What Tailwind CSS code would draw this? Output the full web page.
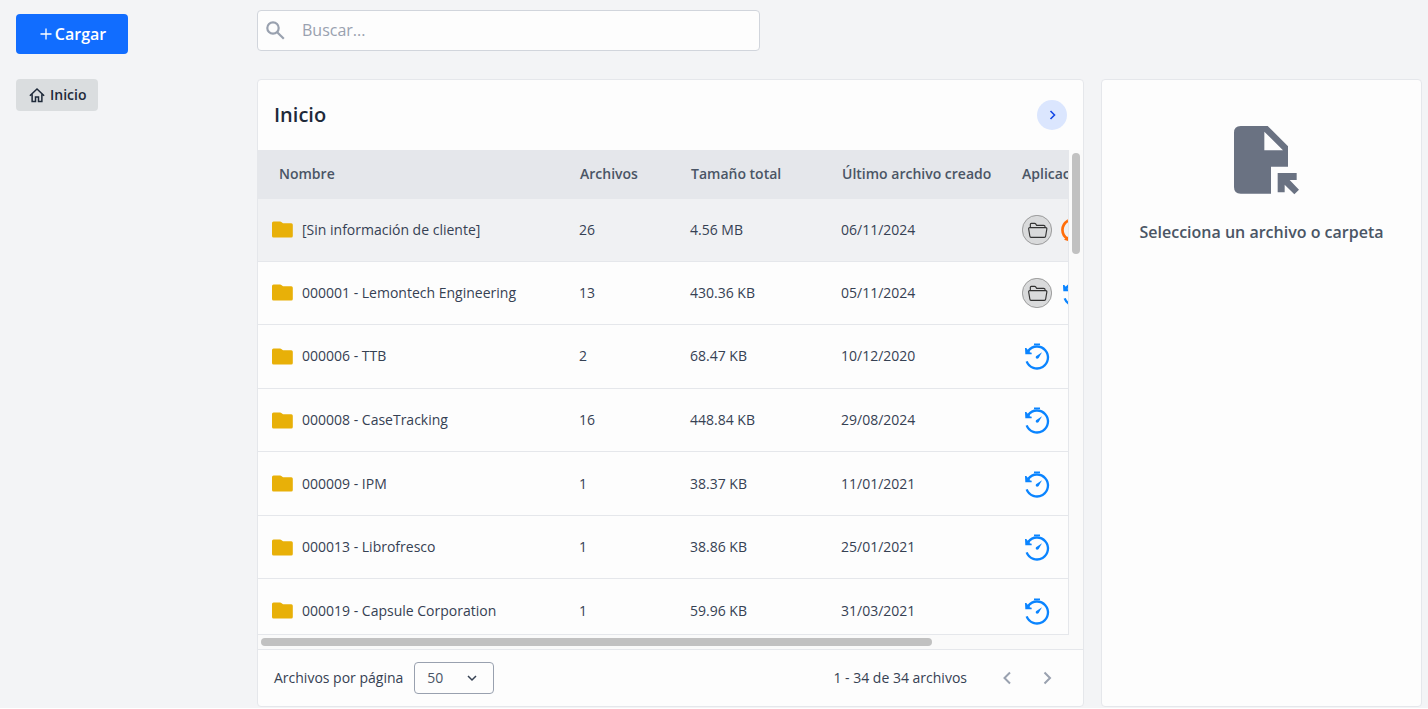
<!DOCTYPE html>
<html lang="es">

<head>
    <meta charset="UTF-8">
    <meta name="viewport" content="width=device-width, initial-scale=1">
    <title>Inicio</title>
    <script src="https://cdn.jsdelivr.net/npm/@tailwindcss/browser@4"></script>
</head>

<body class="bg-white font-['Open_Sans','Noto_Sans',sans-serif] text-sm text-gray-700">
    <!-- Shared icons -->
    <svg class="hidden">
        <symbol id="folder" viewBox="0 0 21 17">
            <path d="M1.5 0.5H8.2Q8.8 0.5 9.3 0.9L11 2.2H19.3Q20.8 2.2 20.8 3.7V15Q20.8 16.5 19.3 16.5H1.5Q0 16.5 0 15V2Q0 0.5 1.5 0.5Z" fill="#e8b008" />
        </symbol>
        <symbol id="app-folder" viewBox="0 0 90 90">
            <circle cx="45" cy="45" r="44" fill="#d9dadb" stroke="#777" stroke-width="2" />
            <g fill="none" stroke="#333" stroke-width="3.5" stroke-linejoin="round">
                <path d="M25 37V28Q25 25 28 25H38Q40 25 41 26.500L44 31H65Q69 31 69 34V38" />
                <path d="M23 38H71Q75 38 74.500 42L71 63Q70.500 67 67 67H27Q24 67 23.500 63L20 42Q19.500 38 23 38Z" />
            </g>
        </symbol>
        <symbol id="app-time" viewBox="0 0 90 90">
            <path d="M14 61A33 33 0 1 0 19 29" fill="none" stroke="#0a84ff" stroke-width="7" />
            <path d="M9 21H13L17 26L24 27L23 34L29 35V40H10Z" fill="#0a84ff" />
            <path d="M36 10H54" stroke="#0a84ff" stroke-width="5" />
            <path d="M60 34L50 51Q46 55 42 52Q40 49 42 46Z" fill="#0a84ff" />
        </symbol>
        <symbol id="app-sync" viewBox="0 0 90 90">
            <path d="M23 72C2 58 2 31 24 17" fill="none" stroke="#ff6d0a" stroke-width="8" />
            <path d="M12 74L30 60V80Z" fill="#ff6d0a" />
            <path d="M24 17A33 33 0 1 1 45 78" fill="none" stroke="#ff6d0a" stroke-width="8" />
        </symbol>
    </svg>

    <div class="flex h-[calc(100vh-1px)] bg-gray-100">
        <!-- Sidebar -->
        <aside class="flex w-[257px] shrink-0 flex-col items-start px-4 pt-[14px]">
            <button type="button" class="flex h-10 w-28 items-center justify-center gap-[3px] rounded bg-[#116dff] pl-[2px] text-base font-semibold text-white">
                <svg class="size-3" viewBox="0 0 12 12" fill="none" stroke="currentColor" stroke-width="1.300"><path d="M6 0.500V11.500M0.500 6H11.500" /></svg>
                Cargar
            </button>
            <nav class="mt-[25px]">
                <a href="#" class="flex h-8 items-center gap-1 rounded bg-[#dadddf] px-3 font-semibold text-gray-800">
                    <svg class="size-[18px]" viewBox="0 0 24 24" fill="none" stroke="currentColor" stroke-width="2"><path d="M2.500 13L12 4L21.500 13M5.500 11V20.500H10V14.500H14V20.500H18.500V11" /></svg>
                    Inicio
                </a>
            </nav>
        </aside>

        <div class="flex min-w-0 grow flex-col pt-[10px] pr-[6px] pb-px">
            <div class="flex h-[41px] w-[503px] items-center gap-[17px] rounded border border-gray-300 bg-[#fdfdfd] px-2">
                <svg class="size-[19px] shrink-0 text-gray-400" viewBox="0 0 19 19" fill="none" stroke="currentColor" stroke-width="2.200"><circle cx="7" cy="7" r="5.700" /><path d="M11.200 11.200L17.800 17.800" /></svg>
                <input type="search" aria-label="Buscar" placeholder="Buscar..." class="min-w-0 grow text-base outline-none placeholder:text-gray-400">
            </div>

            <div class="mt-7 flex min-h-0 grow gap-[17px]">
                <!-- File list -->
                <main class="flex min-w-0 grow flex-col rounded border border-gray-200 bg-[#fdfdfd]">
                    <div class="flex h-[70px] shrink-0 items-center justify-between px-4">
                        <h1 class="text-xl font-semibold text-gray-800">Inicio</h1>
                        <button type="button" aria-label="Mostrar detalle" class="flex size-[30px] items-center justify-center rounded-full bg-[#dbe6fe] text-blue-700">
                            <svg class="size-3" viewBox="0 0 12 12" fill="none" stroke="currentColor" stroke-width="1.600"><path d="M4.500 2L8.500 6L4.500 10" /></svg>
                        </button>
                    </div>

                    <div class="grid min-h-0 grow grid-cols-[1fr_14px] grid-rows-[1fr_14px] bg-[#fafafa]">
                        <div class="overflow-hidden border-r border-b border-gray-200 bg-[#fdfdfd]">
                            <table class="h-[492px] w-[1000px] table-fixed text-left">
                                <colgroup>
                                    <col class="w-[305px]">
                                    <col class="w-[111px]">
                                    <col class="w-[151px]">
                                    <col class="w-[181px]">
                                    <col>
                                </colgroup>
                                <thead class="bg-gray-200 text-gray-600">
                                    <tr>
                                        <th class="h-[49px] pl-[21px] font-semibold">Nombre</th>
                                        <th class="pl-[17px] font-semibold">Archivos</th>
                                        <th class="pl-[17px] font-semibold">Tamaño total</th>
                                        <th class="pl-[17px] font-semibold">Último archivo creado</th>
                                        <th class="pl-4 font-semibold">Aplicaciones</th>
                                    </tr>
                                </thead>
                                <tbody class="divide-y divide-gray-200">
                                    <tr class="bg-[#f0f1f3]">
                                        <td class="pl-[14px]"><div class="flex items-center gap-[9px]"><svg class="h-[17px] w-[21px]"><use href="#folder" /></svg>[Sin información de cliente]</div></td>
                                        <td class="pl-4">26</td>
                                        <td class="pl-4">4.56 MB</td>
                                        <td class="pl-4">06/11/2024</td>
                                        <td class="pl-4"><div class="flex gap-2"><svg class="size-[30px]"><use href="#app-folder" /></svg><svg class="size-[30px]"><use href="#app-sync" /></svg></div></td>
                                    </tr>
                                    <tr>
                                        <td class="pl-[14px]"><div class="flex items-center gap-[9px]"><svg class="h-[17px] w-[21px]"><use href="#folder" /></svg>000001 - Lemontech Engineering</div></td>
                                        <td class="pl-4">13</td>
                                        <td class="pl-4">430.36 KB</td>
                                        <td class="pl-4">05/11/2024</td>
                                        <td class="pl-4"><div class="flex gap-2"><svg class="size-[30px]"><use href="#app-folder" /></svg><svg class="size-[30px]"><use href="#app-time" /></svg></div></td>
                                    </tr>
                                    <tr>
                                        <td class="pl-[14px]"><div class="flex items-center gap-[9px]"><svg class="h-[17px] w-[21px]"><use href="#folder" /></svg>000006 - TTB</div></td>
                                        <td class="pl-4">2</td>
                                        <td class="pl-4">68.47 KB</td>
                                        <td class="pl-4">10/12/2020</td>
                                        <td class="pl-4"><svg class="size-[30px]"><use href="#app-time" /></svg></td>
                                    </tr>
                                    <tr>
                                        <td class="pl-[14px]"><div class="flex items-center gap-[9px]"><svg class="h-[17px] w-[21px]"><use href="#folder" /></svg>000008 - CaseTracking</div></td>
                                        <td class="pl-4">16</td>
                                        <td class="pl-4">448.84 KB</td>
                                        <td class="pl-4">29/08/2024</td>
                                        <td class="pl-4"><svg class="size-[30px]"><use href="#app-time" /></svg></td>
                                    </tr>
                                    <tr>
                                        <td class="pl-[14px]"><div class="flex items-center gap-[9px]"><svg class="h-[17px] w-[21px]"><use href="#folder" /></svg>000009 - IPM</div></td>
                                        <td class="pl-4">1</td>
                                        <td class="pl-4">38.37 KB</td>
                                        <td class="pl-4">11/01/2021</td>
                                        <td class="pl-4"><svg class="size-[30px]"><use href="#app-time" /></svg></td>
                                    </tr>
                                    <tr>
                                        <td class="pl-[14px]"><div class="flex items-center gap-[9px]"><svg class="h-[17px] w-[21px]"><use href="#folder" /></svg>000013 - Librofresco</div></td>
                                        <td class="pl-4">1</td>
                                        <td class="pl-4">38.86 KB</td>
                                        <td class="pl-4">25/01/2021</td>
                                        <td class="pl-4"><svg class="size-[30px]"><use href="#app-time" /></svg></td>
                                    </tr>
                                    <tr>
                                        <td class="pl-[14px]"><div class="flex items-center gap-[9px]"><svg class="h-[17px] w-[21px]"><use href="#folder" /></svg>000019 - Capsule Corporation</div></td>
                                        <td class="pl-4">1</td>
                                        <td class="pl-4">59.96 KB</td>
                                        <td class="pl-4">31/03/2021</td>
                                        <td class="pl-4"><svg class="size-[30px]"><use href="#app-time" /></svg></td>
                                    </tr>
                                </tbody>
                            </table>
                        </div>
                        <!-- Scrollbars -->
                        <div class="flex justify-center pt-[3px]"><div class="h-[101px] w-2 rounded-full bg-[#c1c1c1]"></div></div>
                        <div class="flex items-center pl-[3px]"><div class="h-2 w-[671px] rounded-full bg-[#c1c1c1]"></div></div>
                    </div>

                    <div class="flex h-[57px] shrink-0 items-center justify-between border-t border-gray-200 pr-7 pl-4">
                        <div class="flex items-center gap-[11px]">
                            <label for="pageSize">Archivos por página</label>
                            <div class="relative">
                                <select id="pageSize" class="h-8 w-20 appearance-none rounded border border-gray-400 bg-transparent pl-3 text-gray-600">
                                    <option>50</option>
                                </select>
                                <svg class="pointer-events-none absolute top-[10px] right-4 size-3" viewBox="0 0 12 12" fill="none" stroke="currentColor" stroke-width="1.500"><path d="M2 4L6 8L10 4" /></svg>
                            </div>
                        </div>
                        <div class="flex items-center text-gray-400">
                            <span class="mr-8 text-gray-700">1 - 34 de 34 archivos</span>
                            <button type="button" aria-label="Anterior" class="mr-6"><svg class="size-4" viewBox="0 0 16 16" fill="none" stroke="currentColor" stroke-width="2"><path d="M11 2.500L5.500 8L11 13.500" /></svg></button>
                            <button type="button" aria-label="Siguiente"><svg class="size-4" viewBox="0 0 16 16" fill="none" stroke="currentColor" stroke-width="2"><path d="M5.500 2.500L11 8L5.500 13.500" /></svg></button>
                        </div>
                    </div>
                </main>

                <!-- Detail panel -->
                <section class="flex w-[321px] shrink-0 flex-col items-center rounded border border-gray-200 bg-[#fdfdfd] pt-[46px]">
                    <svg class="ml-[10px] h-[69px] w-[65px] text-gray-500" viewBox="0 0 195 207" fill="currentColor">
                        <path fill-rule="evenodd" d="M20 0H101L162 61V122H111V203H20Q0 203 0 183V20Q0 0 20 0ZM91 17V73H147Z" />
                        <path d="M131 141H188V162H167L195 191L181 205L152 176V199H131Z" />
                    </svg>
                    <p class="mt-[25px] text-base font-semibold text-gray-600">Selecciona un archivo o carpeta</p>
                </section>
            </div>
        </div>
    </div>
</body>

</html>
